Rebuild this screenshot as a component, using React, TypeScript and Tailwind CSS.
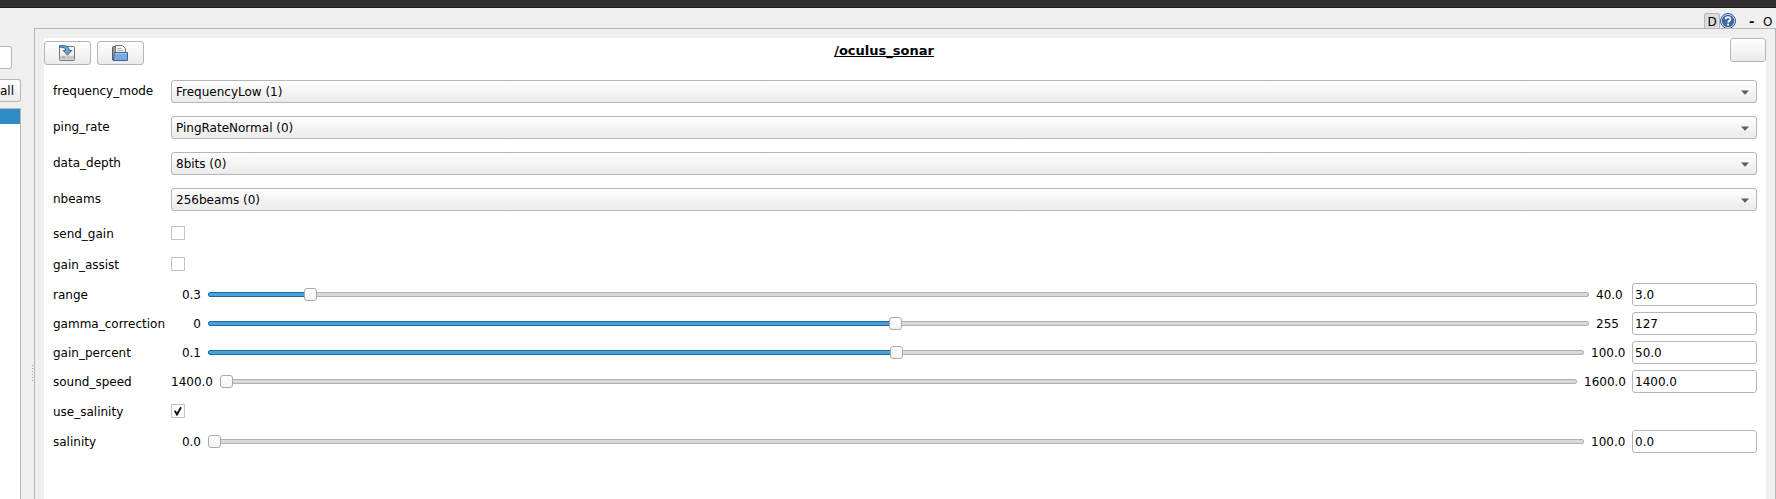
import React from "react";

const font = "font-['DejaVu_Sans','Liberation_Sans',sans-serif]";

function SaveIcon() {
  return (
    <svg width="16" height="16" viewBox="0 0 16 16">
      <rect x="0.5" y="1.5" width="15" height="14" rx="0.8" fill="#f2f2f0" stroke="#777975" />
      <rect x="1" y="10.5" width="14" height="4.5" fill="#d3d4d1" />
      <path d="M2.500 12.500h4M8.500 12.500h1M10.500 12.500h1M12.500 12.500h1" stroke="#a8aaa6" strokeWidth="2" />
      <path
        d="M0.500 0.600C5 0 9.800 0.500 10.200 5.500H12.800L8.500 10.200L4.200 5.500H6.700C6.500 3 4.500 1.800 0.500 2.300Z"
        fill="#6fa3cf"
        stroke="#2b5f8d"
        strokeWidth="0.9"
      />
    </svg>
  );
}

function OpenIcon() {
  return (
    <svg width="16" height="16" viewBox="0 0 16 16">
      <path d="M0.500 15V2.500Q0.500 1.500 1.500 1.500H4L5 3V15.500H1Z" fill="#9a9c98" stroke="#5c5e5a" />
      <path d="M3.500 9V0.500H10.500L13.500 3.500V9Z" fill="#f4f4f2" stroke="#777975" />
      <path d="M5.500 3.500h4M5.500 5.500h6" stroke="#a9aba7" />
      <path d="M2.500 7.500H15.500V15.500H1.500Z" fill="#7fa8d8" stroke="#3465a4" />
      <path d="M3 8.500H15" stroke="#a9c6e8" />
    </svg>
  );
}

function HelpIcon() {
  return (
    <svg width="16" height="16" viewBox="0 0 16 16">
      <circle cx="8" cy="8" r="7.500" fill="#dfe7f2" stroke="#2d5a97" />
      <circle cx="8" cy="8" r="6.200" fill="#42699f" />
      <path d="M5.700 6.300C5.700 3.300 10.500 3.400 10.400 6.100C10.300 7.800 8.100 7.700 8.100 9.600" fill="none" stroke="#fff" strokeWidth="1.700" />
      <rect x="7.200" y="10.700" width="1.800" height="1.800" fill="#fff" />
    </svg>
  );
}

const button = "rounded-[3px] border border-[#b6b6b6] bg-linear-to-b from-[#fefefe] to-[#ebebeb]";

function Label({ text }: { text: string }) {
  return <div className="w-[118px] shrink-0 pt-[2px] leading-[15px] whitespace-nowrap">{text}</div>;
}

function Combo({ label, value }: { label: string; value: string }) {
  return (
    <div className="mb-[13px] flex h-[23px] items-center">
      <div className="-mt-[2px]">
        <Label text={label} />
      </div>
      <div className={`flex h-[23px] flex-1 items-center justify-between pr-[7px] pl-1 ${button}`}>
        <span className="pt-[2px] leading-[15px]">{value}</span>
        <svg className="mt-px" width="8" height="5" viewBox="0 0 8 5">
          <path d="M0 0.500H8L4 4.800Z" fill="#5a5a5a" />
        </svg>
      </div>
    </div>
  );
}

function Check({ label, checked, className }: { label: string; checked?: boolean; className: string }) {
  return (
    <div className={`flex h-[14px] items-center ${className}`}>
      <Label text={label} />
      <div className="flex size-[14px] items-center justify-center border border-[#c3c3c3] bg-white">
        {checked && (
          <svg width="10" height="10" viewBox="0 0 10 10">
            <path d="M1.800 4.800L4 8.500L8 1.200" fill="none" stroke="#111" strokeWidth="1.900" />
          </svg>
        )}
      </div>
    </div>
  );
}

type SliderProps = {
  label: string;
  min: string;
  max: string;
  value: string;
  fill: number;
  minClass: string;
  maxClass: string;
  className: string;
};

function Slider({ label, min, max, value, fill, minClass, maxClass, className }: SliderProps) {
  return (
    <div className={`flex h-[23px] items-center ${className}`}>
      <Label text={label} />
      <div className={`shrink-0 pt-[2px] text-right leading-[15px] ${minClass}`}>{min}</div>
      <div className="flex h-[13px] flex-1 items-center">
        {fill > 0 && (
          <div
            className="-mr-px h-[5px] rounded-l-[2px] border border-[#24699b] bg-[#46a2df]"
            style={{ width: fill + 1 }}
          />
        )}
        <div className="z-10 size-[13px] shrink-0 rounded-[3px] border border-[#a9a9a9] bg-linear-to-b from-white to-[#f3f3f3]" />
        <div className="-ml-px h-[5px] flex-1 rounded-r-[2px] border border-[#b0b0b0] bg-[#d9d9d9]" />
      </div>
      <div className={`shrink-0 pt-[2px] pl-[7px] leading-[15px] ${maxClass}`}>{max}</div>
      <div className="flex h-[23px] w-[125px] shrink-0 items-center rounded-[3px] border border-[#b6b6b6] bg-white pt-[2px] pl-[2px] leading-[15px]">
        {value}
      </div>
    </div>
  );
}

export default function App() {
  return (
    <div className={`flex h-[499px] w-[1776px] flex-col overflow-hidden bg-[#efefef] text-[12px] text-black ${font}`}>
      <div className="h-2 shrink-0 border-b border-[#1d1b1c] bg-[#312f30]" />
      <div className="flex min-h-0 flex-1">
        <aside className="flex w-[34px] shrink-0 flex-col pt-[38px]">
          <div className="h-[23px] w-[12px] rounded-r-[3px] border border-l-0 border-[#b6b6b6] bg-white" />
          <div className="mt-[10px] flex h-[23px] w-[21px] items-center justify-end rounded-r-[3px] border border-l-0 border-[#b6b6b6] bg-linear-to-b from-[#fefefe] to-[#ebebeb] pt-[2px] pr-[6px] leading-[15px]">
            all
          </div>
          <div className="mt-[6px] flex min-h-0 flex-1">
            <div className="w-[21px] border-t border-r border-[#b6b6b6] bg-white">
              <div className="h-[15px] bg-[#308cc6]" />
            </div>
            <div className="ml-[11px] flex flex-col gap-[2px] pt-[257px]">
              <i className="size-px bg-[#a5a5a5]" />
              <i className="size-px bg-[#a5a5a5]" />
              <i className="size-px bg-[#a5a5a5]" />
              <i className="size-px bg-[#a5a5a5]" />
              <i className="size-px bg-[#a5a5a5]" />
              <i className="size-px bg-[#a5a5a5]" />
            </div>
          </div>
        </aside>
        <div className="flex min-w-0 flex-1 flex-col">
          <div className="flex h-5 shrink-0 justify-end pt-[5px] text-[13px]">
            <div className="h-[15px] w-4 rounded-t-[3px] border border-b-0 border-[#b4b4b4] bg-[#dcdcdc] text-center text-[12px] leading-[16px]">D</div>
            <div className="h-[15px] w-4 overflow-hidden">
              <HelpIcon />
            </div>
            <div className="ml-[13px] w-[14px] leading-[17px] font-bold">-</div>
            <div className="w-[13px] text-[12px] leading-[18px]">O</div>
          </div>
          <div className="flex-1 border-t border-r border-l border-[#b6b6b6] pt-[9px] pr-[9px] pl-[9px]">
            <main className="flex h-full flex-col bg-white">
              <header className="flex h-[42px] shrink-0 justify-between">
                <div className="flex w-[100px] gap-[6px] pt-[3px]">
                  <div className={`flex h-6 w-[47px] items-center justify-center pr-px ${button}`}>
                    <SaveIcon />
                  </div>
                  <div className={`flex h-6 w-[47px] items-center justify-center pr-px ${button}`}>
                    <OpenIcon />
                  </div>
                </div>
                <h1 className="flex-1 pt-[5px] text-center text-[13px] leading-[16px] font-bold underline decoration-1 [text-decoration-skip-ink:none]">
                  /oculus_sonar
                </h1>
                <div className="flex w-[142px] justify-end">
                  <div className={`h-6 w-9 ${button}`} />
                </div>
              </header>
              <section className="flex flex-col pr-[9px] pl-[9px]">
                <Combo label="frequency_mode" value="FrequencyLow (1)" />
                <Combo label="ping_rate" value="PingRateNormal (0)" />
                <Combo label="data_depth" value="8bits (0)" />
                <Combo label="nbeams" value="256beams (0)" />
                <Check label="send_gain" className="mt-[2px]" />
                <Check label="gain_assist" className="mt-[17px]" />
                <Slider label="range" min="0.3" max="40.0" value="3.0" fill={96} minClass="w-[37px] pr-[7px]" maxClass="w-[43px]" className="mt-3" />
                <Slider label="gamma_correction" min="0" max="255" value="127" fill={681} minClass="w-[37px] pr-[7px]" maxClass="w-[43px]" className="mt-[6px]" />
                <Slider label="gain_percent" min="0.1" max="100.0" value="50.0" fill={682} minClass="w-[37px] pr-[7px]" maxClass="w-[48px]" className="mt-[6px]" />
                <Slider label="sound_speed" min="1400.0" max="1600.0" value="1400.0" fill={0} minClass="w-[49px] pr-[7px]" maxClass="w-[55px]" className="mt-[6px]" />
                <Check label="use_salinity" checked className="mt-[11px]" />
                <Slider label="salinity" min="0.0" max="100.0" value="0.0" fill={0} minClass="w-[37px] pr-[7px]" maxClass="w-[48px]" className="mt-3" />
              </section>
            </main>
          </div>
        </div>
      </div>
    </div>
  );
}
